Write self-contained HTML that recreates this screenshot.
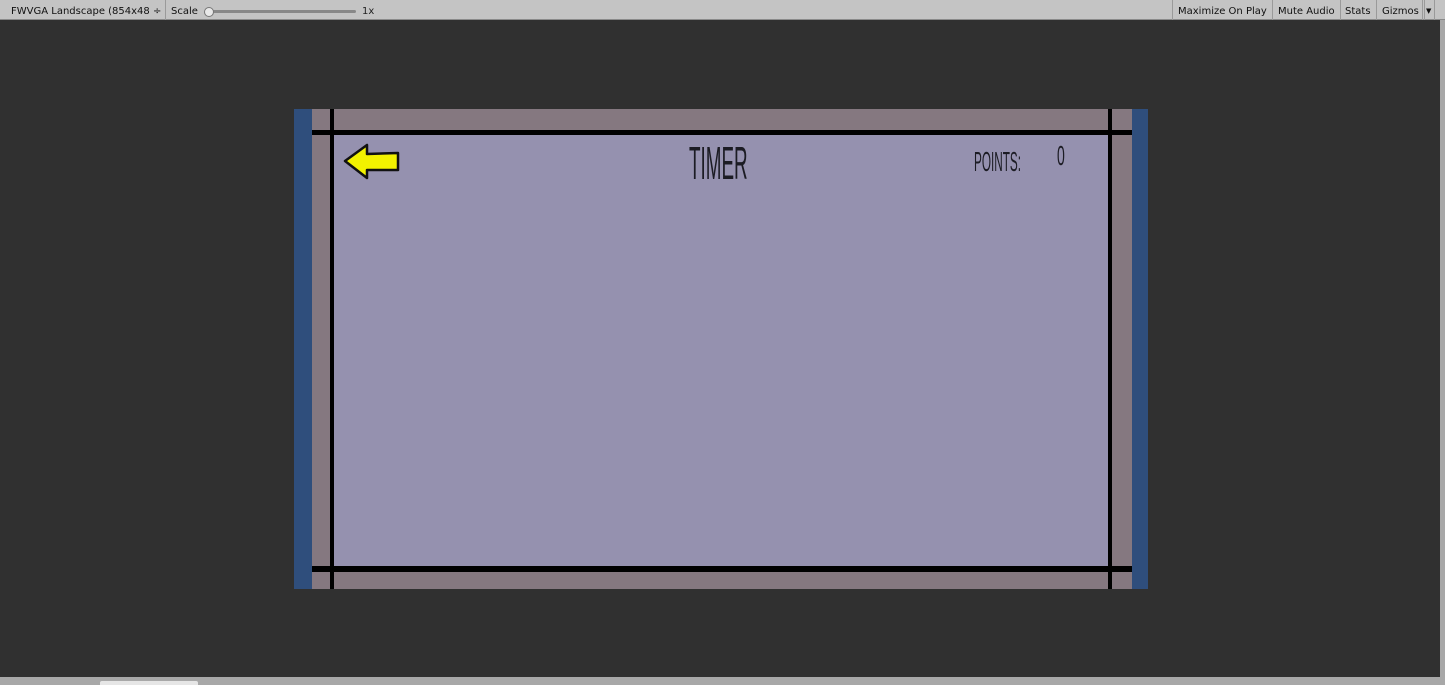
<!DOCTYPE html>
<html><head><style>
*{margin:0;padding:0;box-sizing:border-box}
body{width:1445px;height:685px;background:#303030;position:relative;overflow:hidden;font-family:"DejaVu Sans","Liberation Sans",sans-serif}
.tb{position:absolute;left:0;top:0;width:1445px;height:20px;background:#c4c4c4;border-bottom:1px solid #8a8a8a;font-size:10px;color:#111}
.tb div{position:absolute;top:0;height:20px;line-height:23px;border-right:1px solid #9a9a9a;padding:0 4px}
.a{position:absolute}
.txt{position:absolute;color:#222;transform-origin:left top;font-family:"Liberation Sans",sans-serif;font-weight:normal}
</style></head><body>
<div class="a" style="left:200px;top:0;width:98px;height:3px;background:#dcdcdc"></div>
<div class="tb">
<div style="left:5px;width:161px;padding-left:6px;overflow:hidden;white-space:nowrap">FWVGA Landscape (854x48 ÷</div>
<div style="left:166px;width:1006px;border:none;padding-left:5px">Scale</div>
<div style="left:1172px;border-left:1px solid #9a9a9a;padding:0 5px">Maximize On Play</div>
<div style="left:1273px;padding:0 5px">Mute Audio</div>
<div style="left:1340px;padding:0 5px">Stats</div>
<div style="left:1377px;padding:0 5px">Gizmos</div>
<div style="left:1422px;border-left:1px solid #9a9a9a;padding:0 3px;font-size:7px">▼</div>
</div>
<div class="a" style="left:206px;top:10px;width:150px;height:3px;background:#888;border-radius:2px"></div>
<div class="a" style="left:204px;top:7px;width:10px;height:10px;border-radius:50%;background:#e8e8e8;border:1px solid #777"></div>
<div class="a" style="left:362px;top:6px;font-size:10px;color:#222">1x</div>
<div class="a" style="left:1440px;top:20px;width:5px;height:657px;background:#a8a8a8"></div>
<div class="a" style="left:0;top:677px;width:1445px;height:8px;background:#a8a8a8"></div>
<div class="a" style="left:100px;top:681px;width:98px;height:4px;background:#e6e6e6;border-radius:2px 2px 0 0"></div>

<div class="a" style="left:294px;top:109px;width:854px;height:480px;background:#857880"></div>
<div class="a" style="left:294px;top:109px;width:18px;height:480px;background:#2f4e7c"></div>
<div class="a" style="left:1132px;top:109px;width:16px;height:480px;background:#2f4e7c"></div>
<div class="a" style="left:334px;top:135px;width:774px;height:431px;background:#9591af"></div>
<div class="a" style="left:312px;top:130px;width:820px;height:5px;background:#000"></div>
<div class="a" style="left:312px;top:566px;width:820px;height:6px;background:#000"></div>
<div class="a" style="left:330px;top:109px;width:4px;height:480px;background:#000"></div>
<div class="a" style="left:1108px;top:109px;width:4px;height:480px;background:#000"></div>

<svg class="a" style="left:340px;top:140px" width="64" height="42"><polygon points="5,21 27,5 27,14 58,13 58,30 27,30 27,38" fill="#f2f200" stroke="#111" stroke-width="2.5" stroke-linejoin="round"/></svg>

<div class="txt" style="left:689px;top:136px;font-size:46px;transform:scaleX(0.41);color:#1c1c24">TIMER</div>
<div class="txt" style="left:974px;top:146px;font-size:28px;transform:scaleX(0.42);color:#1c1c24">POINTS:</div>
<div class="txt" style="left:1057px;top:140px;font-size:28px;transform:scaleX(0.5);color:#1c1c24">0</div>
</body></html>
